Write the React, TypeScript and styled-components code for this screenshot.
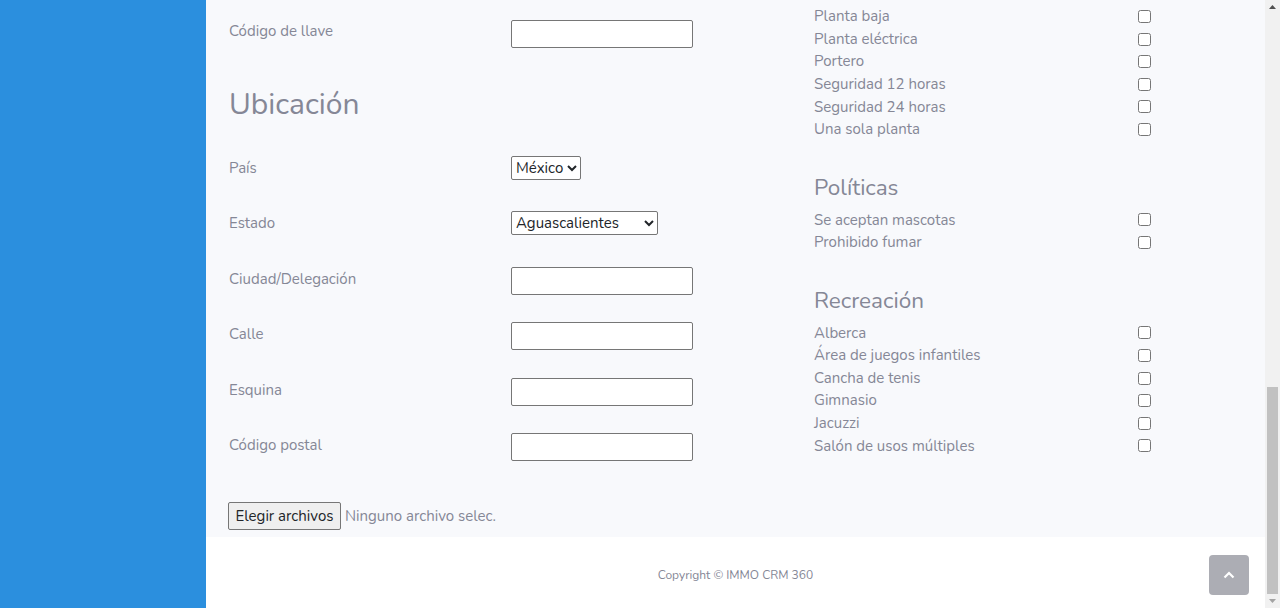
import React from 'react';
import styled, { createGlobalStyle } from 'styled-components';

const FONT = `"Nunito", "Open Sans", "Noto Sans", sans-serif`;

const Global = createGlobalStyle`
  html, body { margin: 0; padding: 0; height: 100%; overflow: hidden; }
  body { font-family: ${FONT}; font-size: 15px; line-height: 1.5; color: #858796; background: #fff; }
  #root { height: 100%; }
  * { box-sizing: border-box; }
`;

const Shell = styled.div`
  display: flex;
  height: 608px;
  width: 1280px;
`;

const Sidebar = styled.nav`
  width: 206px;
  flex: none;
  background: #2b8fde;
`;

const Main = styled.div`
  flex: 1;
  min-width: 0;
  display: flex;
  flex-direction: column;
  position: relative;
`;

const Content = styled.main`
  flex: 1;
  background: #f8f9fc;
  padding: 0 23px;
  display: grid;
  grid-template-columns: 585px 1fr;
`;

const LeftCol = styled.section`
  padding-top: 20px;
`;

const FieldRow = styled.div`
  display: grid;
  grid-template-columns: 282px auto;
  align-items: start;
  min-height: 28px;
  margin-bottom: 27.4px;
`;

const Label = styled.label<{ $first?: boolean }>`
  display: block;
  line-height: 22.6px;
  padding-top: ${(p) => (p.$first ? 0 : 1)}px;
`;

const SectionTitle = styled.h3`
  font-size: 30px;
  font-weight: 400;
  line-height: 1.2;
  margin: 39px 0 33px;
  color: #858796;
`;

const TextInput = styled.input`
  width: 182px;
  height: 28px;
  border: 1px solid #767676;
  border-radius: 2px;
  background: #fff;
  padding: 1px 2px;
  font: inherit;
`;

const Select = styled.select<{ $w: number }>`
  height: 24px;
  width: ${(p) => p.$w}px;
  border: 1px solid #767676;
  border-radius: 2px;
  background: #fff;
  color: #212529;
  font-family: ${FONT};
  font-size: 15px;
  padding: 0;
`;

const FileRow = styled.div`
  display: flex;
  align-items: center;
  gap: 4px;
  margin-top: 41px;
  margin-left: -1px;
`;

const FileButton = styled.button`
  height: 28px;
  padding: 0 6.5px;
  border: 1px solid #767676;
  border-radius: 2px;
  background: #efefef;
  color: #212529;
  font-family: ${FONT};
  font-size: 15px;
`;

const FileText = styled.span`
  color: #858796;
`;

const RightCol = styled.section`
  padding-top: 5.2px;
`;

const Group = styled.div<{ $first?: boolean }>`
  margin-top: ${(p) => (p.$first ? 0 : 33.5)}px;
`;

const GroupTitle = styled.h4`
  font-size: 22.5px;
  font-weight: 400;
  line-height: 1.2;
  margin: 0 0 7.3px;
  color: #858796;
`;

const CheckRow = styled.div`
  display: grid;
  grid-template-columns: 324px 13px;
  align-items: center;
  height: 22.6px;
`;

const Check = styled.input`
  width: 13px;
  height: 13px;
  margin: 0;
`;

const Footer = styled.footer`
  height: 71px;
  flex: none;
  background: #fff;
  display: flex;
  align-items: center;
  justify-content: center;
  padding-top: 5px;
  font-size: 12px;
  color: #858796;
`;

const ScrollTop = styled.a`
  position: absolute;
  right: 16px;
  bottom: 13px;
  width: 40px;
  height: 40px;
  border-radius: 4px;
  background: rgba(90, 92, 105, 0.5);
  display: flex;
  align-items: center;
  justify-content: center;
`;

const ScrollBar = styled.div`
  width: 15px;
  flex: none;
  background: #f1f1f1;
  display: flex;
  flex-direction: column;
  align-items: center;
`;

const ArrowBox = styled.div`
  height: 14px;
  width: 15px;
  display: flex;
  align-items: center;
  justify-content: center;
`;

const Thumb = styled.div`
  margin-top: auto;
  width: 11px;
  height: 207px;
  background: #c1c1c1;
`;

const features = [
  'Planta baja',
  'Planta eléctrica',
  'Portero',
  'Seguridad 12 horas',
  'Seguridad 24 horas',
  'Una sola planta',
];
const politicas = ['Se aceptan mascotas', 'Prohibido fumar'];
const recreacion = [
  'Alberca',
  'Área de juegos infantiles',
  'Cancha de tenis',
  'Gimnasio',
  'Jacuzzi',
  'Salón de usos múltiples',
];

const CheckList = ({ items }: { items: string[] }) => (
  <>
    {items.map((t) => (
      <CheckRow key={t}>
        <span>{t}</span>
        <Check type="checkbox" />
      </CheckRow>
    ))}
  </>
);

export default function App() {
  return (
    <>
      <Global />
      <Shell>
        <Sidebar />
        <Main>
          <Content>
            <LeftCol>
              <FieldRow>
                <Label $first>Código de llave</Label>
                <TextInput type="text" />
              </FieldRow>
              <SectionTitle>Ubicación</SectionTitle>
              <FieldRow>
                <Label>País</Label>
                <div>
                  <Select $w={70} defaultValue="mx">
                    <option value="mx">México</option>
                  </Select>
                </div>
              </FieldRow>
              <FieldRow>
                <Label>Estado</Label>
                <div>
                  <Select $w={147} defaultValue="ags">
                    <option value="ags">Aguascalientes</option>
                  </Select>
                </div>
              </FieldRow>
              <FieldRow>
                <Label>Ciudad/Delegación</Label>
                <TextInput type="text" />
              </FieldRow>
              <FieldRow>
                <Label>Calle</Label>
                <TextInput type="text" />
              </FieldRow>
              <FieldRow>
                <Label>Esquina</Label>
                <TextInput type="text" />
              </FieldRow>
              <FieldRow>
                <Label>Código postal</Label>
                <TextInput type="text" />
              </FieldRow>
              <FileRow>
                <FileButton type="button">Elegir archivos</FileButton>
                <FileText>Ninguno archivo selec.</FileText>
              </FileRow>
            </LeftCol>
            <RightCol>
              <Group $first>
                <CheckList items={features} />
              </Group>
              <Group>
                <GroupTitle>Políticas</GroupTitle>
                <CheckList items={politicas} />
              </Group>
              <Group>
                <GroupTitle>Recreación</GroupTitle>
                <CheckList items={recreacion} />
              </Group>
            </RightCol>
          </Content>
          <Footer>Copyright © IMMO CRM 360</Footer>
          <ScrollTop href="#">
            <svg width="12" height="8" viewBox="0 0 12 8">
              <polyline points="1.5,6.5 6,2 10.5,6.5" fill="none" stroke="#fff" strokeWidth="2.2" />
            </svg>
          </ScrollTop>
        </Main>
        <ScrollBar>
          <ArrowBox>
            <svg width="7" height="4" viewBox="0 0 7 4">
              <polygon points="0,4 3.5,0 7,4" fill="#505050" />
            </svg>
          </ArrowBox>
          <Thumb />
          <ArrowBox>
            <svg width="7" height="4" viewBox="0 0 7 4">
              <polygon points="0,0 3.5,4 7,0" fill="#a3a3a3" />
            </svg>
          </ArrowBox>
        </ScrollBar>
      </Shell>
    </>
  );
}
